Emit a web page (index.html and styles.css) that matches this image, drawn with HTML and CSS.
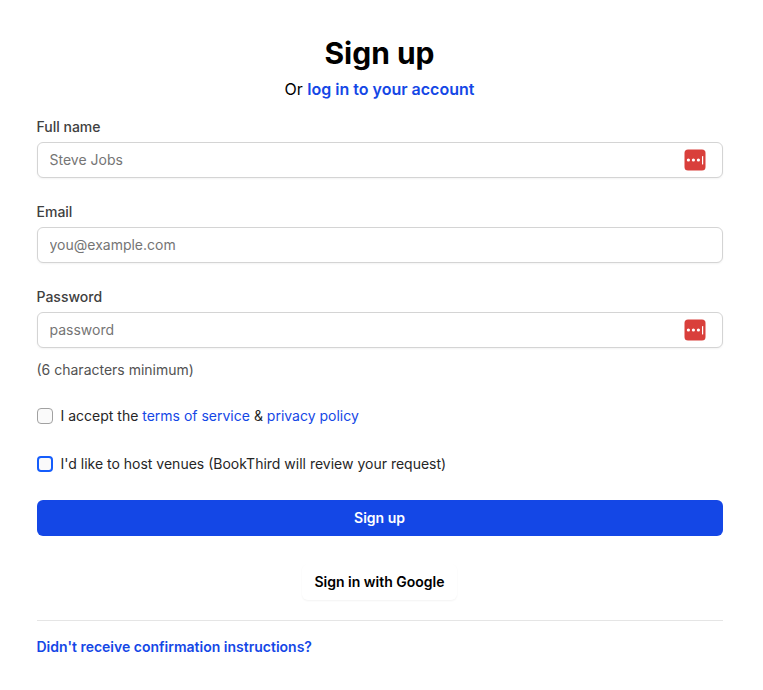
FILE: index.html
```html
<!DOCTYPE html>
<html lang="en">
<head>
<meta charset="utf-8">
<title>Sign up</title>
<link rel="stylesheet" href="styles.css">
</head>
<body>
<main class="page">
  <h1 class="title">Sign up</h1>
  <p class="subtitle">Or <a href="#">log in to your account</a></p>
  <form class="form">
    <div class="field">
      <label class="label" for="name">Full name</label>
      <div class="control">
        <input class="input" id="name" type="text" placeholder="Steve Jobs">
        <svg class="badge" viewBox="0 0 22 22"><rect x=".5" y=".5" width="21" height="21" rx="3.5" fill="#d93f3b"/><g fill="#fff"><circle cx="4.4" cy="11" r="1.6"/><circle cx="9.4" cy="11" r="1.6"/><circle cx="14.4" cy="11" r="1.6"/><rect x="18" y="7" width="1.2" height="8.4" rx=".5"/></g></svg>
      </div>
    </div>
    <div class="field">
      <label class="label" for="email">Email</label>
      <div class="control"><input class="input" id="email" type="email" placeholder="you@example.com"></div>
    </div>
    <div class="field">
      <label class="label" for="password">Password</label>
      <div class="control">
        <input class="input" id="password" type="password" placeholder="password">
        <svg class="badge" viewBox="0 0 22 22"><rect x=".5" y=".5" width="21" height="21" rx="3.5" fill="#d93f3b"/><g fill="#fff"><circle cx="4.4" cy="11" r="1.6"/><circle cx="9.4" cy="11" r="1.6"/><circle cx="14.4" cy="11" r="1.6"/><rect x="18" y="7" width="1.2" height="8.4" rx=".5"/></g></svg>
      </div>
      <p class="hint">(6 characters minimum)</p>
    </div>
    <div class="check">
      <input class="box" id="terms" type="checkbox">
      <label for="terms">I accept the <a href="#">terms of service</a> &amp; <a href="#">privacy policy</a></label>
    </div>
    <div class="check">
      <input class="box box-active" id="host" type="checkbox">
      <label for="host">I'd like to host venues (BookThird will review your request)</label>
    </div>
    <button class="submit" type="button">Sign up</button>
  </form>
  <button class="google" type="button">Sign in with Google</button>
  <footer class="footer"><a href="#">Didn't receive confirmation instructions?</a></footer>
</main>
</body>
</html>
```

FILE: styles.css
```css
* { box-sizing: border-box; }
body { margin: 0; background: #fff; color: #000; font-family: Inter, sans-serif; font-size: 16px; line-height: 24px; }
a { color: #1447e6; text-decoration: none; }
h1, p { margin: 0; }
.page { display: flex; flex-direction: column; padding: 35px 40.5px 0 36.5px; }
.title { font-size: 30px; line-height: 36px; font-weight: 650; text-align: center; }
.subtitle { margin-top: 6px; text-align: center; }
.subtitle a { font-weight: 600; }
.form { display: flex; flex-direction: column; gap: 24px; margin-top: 16px; font-size: 14px; line-height: 20px; }
.label { display: block; color: #404040; font-weight: 500; }
.control { position: relative; margin-top: 5px; }
.input { display: block; width: 100%; height: 36px; padding: 7px 12px 9px; border: 1px solid #d4d4d4; border-radius: 6px; background: #fff; box-shadow: 0 1px 2px rgba(0,0,0,.05); font: inherit; outline: none; }
.input::placeholder { color: #757575; opacity: 1; }
.badge { position: absolute; top: 7px; right: 17px; width: 22px; height: 22px; }
.hint { margin-top: 12px; color: #525252; }
.check { display: flex; align-items: center; height: 24px; gap: 8px; color: #262626; }
.box { appearance: none; width: 16px; height: 16px; margin: 0; border: 1px solid #a1a1a1; border-radius: 4px; background: #fafafa; }
.box-active { border: 2px solid #155dfc; }
.submit { height: 36px; padding: 0; border: 0; border-radius: 6px; background: #1447e6; color: #fff; font: 600 14px/20px Inter, sans-serif; }
.google { align-self: center; width: 155px; height: 36px; margin-top: 28px; padding: 0; border: 0; border-radius: 6px; background: #fff; color: #000; box-shadow: 0 1px 2px rgba(0,0,0,.05); font: 600 14px/20px Inter, sans-serif; }
.footer { margin-top: 20px; padding-top: 16px; border-top: 1px solid #e5e5e5; font-size: 14px; line-height: 20px; font-weight: 600; }
```
